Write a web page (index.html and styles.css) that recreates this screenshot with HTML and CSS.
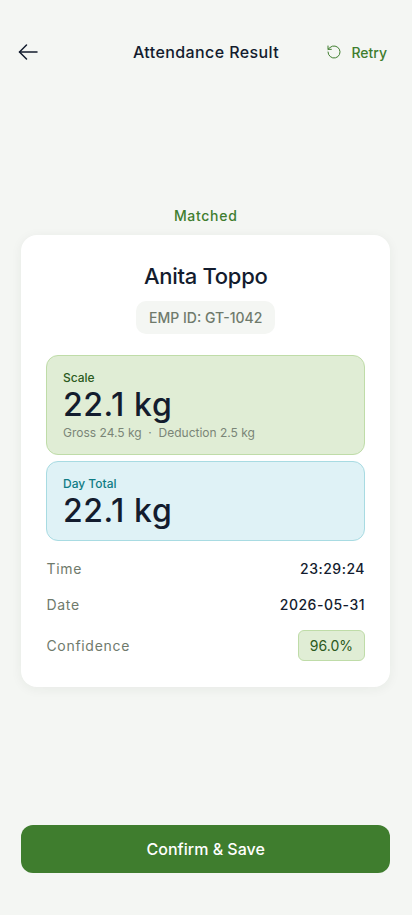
FILE: index.html
```html
<!DOCTYPE html>
<html lang="en">
<head>
    <meta charset="UTF-8">
    <meta name="viewport" content="width=device-width, initial-scale=1.0">
    <title>Attendance Result</title>
    <link rel="stylesheet" href="styles.css">
</head>
<body>
    <div class="screen">
        <div class="header">
            <div class="side">
                <svg width="24" height="24" viewBox="0 0 24 24" fill="none" stroke="#131c2e" stroke-width="1.5" stroke-linecap="round" stroke-linejoin="round">
                    <path d="M21 12H3.5"/>
                    <path d="M10.5 5l-7 7 7 7"/>
                </svg>
            </div>
            <div class="title">Attendance Result</div>
            <div class="side retry">
                <svg width="16" height="16" viewBox="0 0 24 24" fill="none" stroke="#3f7d2e" stroke-width="1.5" stroke-linecap="round" stroke-linejoin="round">
                    <path d="M3 12a9 9 0 1 0 3-6.7L3 8"/>
                    <path d="M3 3v5h5"/>
                </svg>
                <span>Retry</span>
            </div>
        </div>
        <div class="main">
            <div class="status">Matched</div>
            <div class="card">
                <div class="name">Anita Toppo</div>
                <div class="emp">EMP ID: GT-1042</div>
                <div class="box box-green">
                    <div class="box-label">Scale</div>
                    <div class="box-value">22.1 kg</div>
                    <div class="box-note">Gross 24.5 kg &nbsp;·&nbsp; Deduction 2.5 kg</div>
                </div>
                <div class="box box-blue">
                    <div class="box-label">Day Total</div>
                    <div class="box-value">22.1 kg</div>
                </div>
                <div class="rows">
                    <div class="row"><span class="key">Time</span><span class="val">23:29:24</span></div>
                    <div class="row"><span class="key">Date</span><span class="val">2026-05-31</span></div>
                    <div class="row"><span class="key">Confidence</span><span class="pill">96.0%</span></div>
                </div>
            </div>
        </div>
        <div class="footer">
            <div class="confirm">Confirm &amp; Save</div>
        </div>
    </div>
</body>
</html>
```

FILE: styles.css
```css
* {
    box-sizing: border-box;
}
html, body {
    margin: 0;
    height: 100%;
}
body {
    background: #f4f6f3;
    font-family: Inter, "Liberation Sans", sans-serif;
    color: #131c2e;
}
.screen {
    height: 915px;
    display: flex;
    flex-direction: column;
    overflow: hidden;
}

/* top bar */
.header {
    display: flex;
    align-items: center;
    height: 40px;
    margin-top: 32px;
    padding: 0 16px;
}
.side {
    flex: 1;
    display: flex;
    align-items: center;
}
.title {
    font-size: 16px;
    font-weight: 500;
    line-height: 24px;
    letter-spacing: 0.4px;
}
.retry {
    justify-content: flex-end;
    gap: 9px;
    font-size: 14px;
    font-weight: 500;
    color: #3f7d2e;
}
.retry span {
    margin-right: 9px;
}

.main {
    flex: 1;
    padding: 134px 21.6px 0 21px;
}
.status {
    text-align: center;
    font-size: 14px;
    font-weight: 500;
    line-height: 20px;
    letter-spacing: 0.7px;
    color: #3f7d2e;
    margin-bottom: 9px;
}
.card {
    background: #fff;
    border-radius: 16px;
    padding: 24px 25.4px 19px;
    box-shadow: 0 2px 12px rgba(30, 50, 30, 0.06);
    display: flex;
    flex-direction: column;
}
.name {
    text-align: center;
    font-size: 22px;
    font-weight: 500;
    line-height: 34px;
    letter-spacing: -0.3px;
}
.emp {
    align-self: center;
    margin-top: 8px;
    background: #f4f6f3;
    border-radius: 10px;
    padding: 0 13px;
    height: 33px;
    line-height: 33px;
    font-size: 14px;
    font-weight: 500;
    color: #6f7a6c;
}

.box {
    border-radius: 12px;
    padding: 14px 15.6px 0;
    border: 1px solid;
    flex-shrink: 0;
}
.box-green {
    margin-top: 21px;
    height: 100px;
    background: #e0edd5;
    border-color: #bfdca8;
}
.box-blue {
    margin-top: 6px;
    height: 80px;
    background: #dff2f6;
    border-color: #a8dbe2;
}
.box-label {
    font-size: 12px;
    font-weight: 500;
    line-height: 16px;
    color: #2b5a20;
}
.box-blue .box-label {
    color: #0f7c85;
}
.box-value {
    font-size: 32px;
    font-weight: 500;
    line-height: 38px;
    letter-spacing: 0.6px;
}
.box-note {
    font-size: 12px;
    line-height: 16px;
    margin-top: 1px;
    color: #7a8577;
}

.rows {
    margin-top: 9px;
}
.row {
    display: flex;
    align-items: center;
    justify-content: space-between;
    height: 36px;
    font-size: 14px;
}
.row:last-child {
    height: 46px;
}
.key {
    letter-spacing: 0.7px;
    color: #6f7a6c;
}
.val {
    font-weight: 500;
    letter-spacing: 0.5px;
}
.pill {
    background: #e0edd5;
    border: 1px solid #bfdca8;
    border-radius: 6px;
    padding: 0 11px;
    height: 31px;
    line-height: 29px;
    font-weight: 400;
    color: #2b5a20;
}

.footer {
    padding: 0 21.6px 42px 21px;
}
.confirm {
    height: 48px;
    line-height: 48px;
    border-radius: 12px;
    background: #3f7d2e;
    color: #fff;
    text-align: center;
    font-size: 16px;
    font-weight: 500;
}
```
